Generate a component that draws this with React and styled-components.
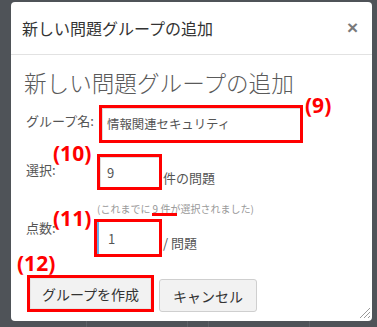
import React from "react";
import styled, { createGlobalStyle } from "styled-components";

const Global = createGlobalStyle`
  html, body { margin: 0; padding: 0; }
  body {
    width: 377px; height: 327px; overflow: hidden;
    background: #4f5358;
    font-family: "Noto Sans CJK JP", "Noto Sans", sans-serif;
  }
`;

const Page = styled.div`
  padding: 2px 0 0 11px;
`;

const Dialog = styled.div`
  position: relative;
  width: 361px;
  height: 319px;
  background: #fff;
  border-radius: 4px;
  box-sizing: border-box;
  display: flex;
  flex-direction: column;
  overflow: hidden;
`;

const Header = styled.div`
  height: 52px;
  border-bottom: 1px solid #e2e2e2;
  display: flex;
  align-items: center;
  justify-content: space-between;
  padding: 0 14px 0 11px;
`;

const Title = styled.div`
  font-size: 16px;
  line-height: 20px;
  color: #333;
`;

const Close = styled.span`
  font-family: "Liberation Sans", sans-serif;
  font-weight: bold;
  font-size: 19px;
  line-height: 20px;
  color: #7a7a7a;
`;

const Body = styled.div`
  padding: 15px 0 0 15px;
  display: flex;
  flex-direction: column;
`;

const Heading = styled.div`
  height: 26px;
  font-size: 22.6px;
  font-weight: 300;
  line-height: 26px;
  color: #5a5a5a;
  margin-left: -2px;
  margin-bottom: 9px;
`;

const Row = styled.div`
  position: relative;
  display: flex;
  margin-top: ${(p) => p.$mt || 0}px;
`;

const Label = styled.div`
  width: 71px;
  flex: none;
  font-size: 13px;
  line-height: 16px;
  color: #555;
  margin-top: ${(p) => p.$mt}px;
`;

const Field = styled.div`
  box-sizing: border-box;
  width: ${(p) => p.$w}px;
  height: ${(p) => p.$h}px;
  margin-left: ${(p) => p.$ml || 0}px;
  border: 3px solid #ff0000;
  padding-left: ${(p) => p.$pl}px;
  display: flex;
  align-items: center;
  font-size: ${(p) => p.$fs || 13}px;
  color: #555;
  box-shadow: inset ${(p) => (p.$focus ? "2px 0 0 #66afe9" : "1px 1px 0 #dcdcdc")};
`;

const Suffix = styled.div`
  align-self: flex-end;
  margin-left: 1px;
  margin-bottom: ${(p) => p.$mb}px;
  font-size: 13px;
  line-height: 16px;
  color: #555;
`;

const Help = styled.div`
  position: relative;
  margin: 13px 0 0 71px;
  font-size: 10px;
  line-height: 12px;
  color: #999;
`;

const Underline = styled.span`
  position: absolute;
  left: 55px;
  top: 10px;
  width: 25px;
  height: 3px;
  background: #ff0000;
`;

const Mark = styled.span`
  position: absolute;
  left: ${(p) => p.$x}px;
  top: ${(p) => p.$y}px;
  font-family: "Noto Sans", sans-serif;
  font-weight: bold;
  font-size: 21px;
  line-height: 24px;
  color: #f00;
  white-space: nowrap;
`;

const Buttons = styled.div`
  position: relative;
  display: flex;
  align-items: flex-end;
  gap: 5px;
  margin: 18px 0 0 1px;
`;

const Button = styled.div`
  box-sizing: border-box;
  height: ${(p) => p.$h}px;
  width: ${(p) => p.$w}px;
  display: flex;
  align-items: center;
  justify-content: center;
  font-size: 14px;
  color: #333;
  background: #f2f2f2;
  border: ${(p) => (p.$red ? "3px solid #ff0000" : "1px solid #cfcfcf")};
  border-radius: ${(p) => (p.$red ? 0 : 3)}px;
  box-shadow: ${(p) => (p.$red ? "inset 0 0 0 1px #e6e6e6" : "none")};
`;

const Grip = styled.svg`
  position: absolute;
  right: 1px;
  bottom: 2px;
`;

const Behind = styled.div`
  display: flex;
  height: 6px;
  margin: 0 0 0 75px;
`;

const BehindBtn = styled.div`
  width: ${(p) => p.$w}px;
  border-left: 1px solid #5d6166;
  border-right: 1px solid #5d6166;
  margin-right: 20px;
`;

export default function App() {
  return (
    <>
      <Global />
      <Page>
        <Dialog>
          <Header>
            <Title>新しい問題グループの追加</Title>
            <Close>×</Close>
          </Header>
          <Body>
            <Heading>新しい問題グループの追加</Heading>
            <Row>
              <Label $mt={8}>グループ名:</Label>
              <Field $w={204} $h={38} $ml={2} $pl={5} $fs={12.4}>
                情報関連セキュリティ
              </Field>
              <Mark $x={279} $y={-12}>(9)</Mark>
            </Row>
            <Row $mt={11}>
              <Label $mt={8}>選択:</Label>
              <Field $w={65} $h={36} $pl={7}>9</Field>
              <Suffix $mb={4}>件の問題</Suffix>
              <Mark $x={27} $y={-13}>(10)</Mark>
            </Row>
            <Help>
              (これまでに 9 件が選択されました)
              <Underline />
            </Help>
            <Row $mt={4}>
              <Label $mt={1}>点数:</Label>
              <Field $w={68} $h={38} $ml={-3} $pl={11} $focus>1</Field>
              <Suffix $mb={6}>/ 問題</Suffix>
              <Mark $x={27} $y={-13}>(11)</Mark>
            </Row>
            <Buttons>
              <Button $red $w={127} $h={37}>グループを作成</Button>
              <Button $w={98} $h={33}>キャンセル</Button>
              <Mark $x={-10} $y={-24}>(12)</Mark>
            </Buttons>
          </Body>
          <Grip width="12" height="12" viewBox="0 0 12 12">
            <g stroke="#9a9a9a" strokeWidth="1">
              <line x1="11" y1="1" x2="1" y2="11" />
              <line x1="11" y1="5" x2="5" y2="11" />
              <line x1="11" y1="9" x2="9" y2="11" />
            </g>
          </Grip>
        </Dialog>
        <Behind>
          <BehindBtn $w={100} />
          <BehindBtn $w={100} />
        </Behind>
      </Page>
    </>
  );
}
